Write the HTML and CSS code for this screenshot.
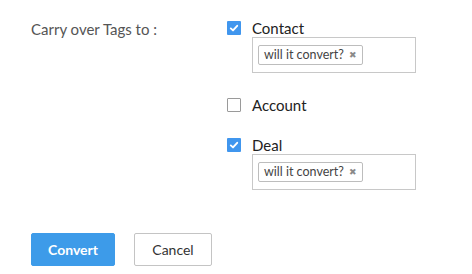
FILE: index.html
```html
<!DOCTYPE html>
<html lang="en">
<head>
	<meta charset="UTF-8">
	<title>Convert</title>
	<link rel="stylesheet" href="styles.css">
</head>
<body>
	<div class="form">
		<div class="row">
			<div class="label">Carry over Tags to :</div>
			<div class="options">
				<div class="option">
					<div class="check-line">
						<span class="box checked"><svg viewBox="0 0 14 14" width="14" height="14"><path d="M3.8 7.4 L6 9.4 L10.2 4.8" fill="none" stroke="#fff" stroke-width="1.9" stroke-linecap="round" stroke-linejoin="round"/></svg></span>
						<span class="name">Contact</span>
					</div>
					<div class="tags">
						<span class="tag">will it convert? <span class="x">&#10006;</span></span>
					</div>
				</div>
				<div class="option">
					<div class="check-line">
						<span class="box"></span>
						<span class="name">Account</span>
					</div>
				</div>
				<div class="option">
					<div class="check-line">
						<span class="box checked"><svg viewBox="0 0 14 14" width="14" height="14"><path d="M3.8 7.4 L6 9.4 L10.2 4.8" fill="none" stroke="#fff" stroke-width="1.9" stroke-linecap="round" stroke-linejoin="round"/></svg></span>
						<span class="name">Deal</span>
					</div>
					<div class="tags">
						<span class="tag">will it convert? <span class="x">&#10006;</span></span>
					</div>
				</div>
			</div>
		</div>
		<div class="buttons">
			<button class="btn primary">Convert</button>
			<button class="btn">Cancel</button>
		</div>
	</div>
</body>
</html>
```

FILE: styles.css
```css
body{
	margin: 0;
	font-family: Lato, "Liberation Sans", sans-serif;
	background: #fff;
}
.form{
	padding: 20px 0 0 31px;
}
.row{
	display: flex;
}
.label{
	width: 196px;
	font-size: 15px;
	color: #555;
	line-height: 16px;
	padding-top: 1px;
}
.option{
	margin-bottom: 24px;
}
.check-line{
	display: flex;
	align-items: center;
	height: 16px;
	gap: 11px;
}
.box{
	box-sizing: border-box;
	width: 14px;
	height: 14px;
	border: 1px solid #9a9a9a;
	border-radius: 1px;
	display: block;
}
.box.checked{
	border: none;
	background: #4096ee;
}
.box svg{
	display: block;
}
.name{
	font-size: 15px;
	color: #222;
}
.tags{
	box-sizing: border-box;
	margin: 1px 0 0 25px;
	width: 164px;
	height: 36px;
	border: 1px solid #c8c8c8;
	padding: 5px;
}
.tag{
	box-sizing: border-box;
	display: inline-flex;
	align-items: center;
	height: 20px;
	padding: 0 5px;
	border: 1px solid #bdbdbd;
	border-radius: 2px;
	font-size: 12.5px;
	color: #444;
	white-space: pre;
}
.x{
	font-size: 9px;
	color: #8a8a8a;
	margin-left: 2px;
}
.buttons{
	display: flex;
	gap: 19px;
	margin-top: 19px;
}
.btn{
	box-sizing: border-box;
	height: 33px;
	border: 1px solid #c4c4c4;
	border-radius: 2px;
	background: #fff;
	font-family: Lato, "Liberation Sans", sans-serif;
	font-size: 14px;
	color: #333;
	width: 78px;
	padding: 0;
}
.btn.primary{
	width: 84px;
	background: #3d9be9;
	border-color: #3d9be9;
	color: #fff;
	font-weight: bold;
}
```
